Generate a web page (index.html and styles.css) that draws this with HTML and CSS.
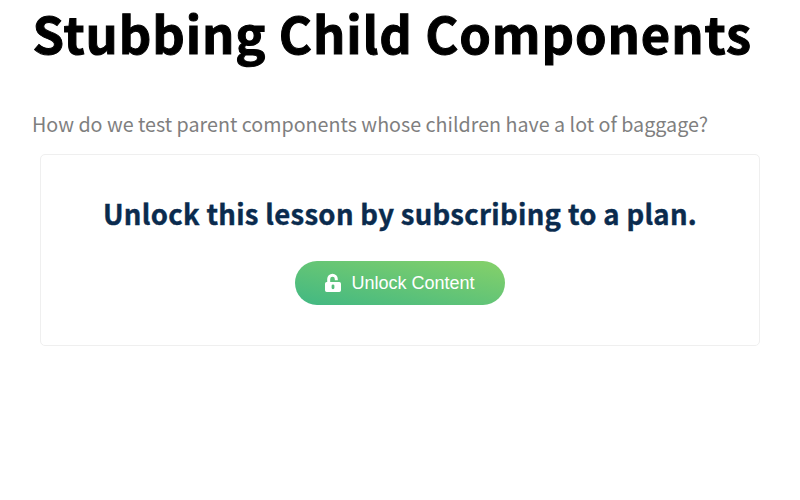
FILE: index.html
```html
<!DOCTYPE html>
<html lang="en">
<head>
<meta charset="utf-8">
<title>Stubbing Child Components</title>
<link rel="stylesheet" href="styles.css">
</head>
<body>
<main class="lesson">
<h1 class="title">Stubbing Child Components</h1>
<p class="summary">How do we test parent components whose children have a lot of baggage?</p>
<section class="locked">
<h2 class="locked-title">Unlock this lesson by subscribing to a plan.</h2>
<button class="unlock" type="button">
<svg class="icon" viewBox="0 0 18 20" aria-hidden="true"><path fill-rule="evenodd" d="M3.2 9V6a5.3 5.3 0 0 1 10.6 0v1.2h-3V6a2.3 2.3 0 0 0-4.6 0v3H15.3a1.7 1.7 0 0 1 1.7 1.7v6.6a1.7 1.7 0 0 1-1.7 1.7H2.7a1.7 1.7 0 0 1-1.7-1.7v-6.6a1.7 1.7 0 0 1 1.7-1.7zM9 11.4a1.4 1.4 0 0 0-1.4 1.4v2a1.4 1.4 0 0 0 2.8 0v-2A1.4 1.4 0 0 0 9 11.4z"/></svg>
<span class="label">Unlock Content</span>
</button>
</section>
</main>
</body>
</html>
```
FILE: styles.css
```css
* { box-sizing: border-box; }
body { margin: 0; background: #fff; font-family: "Noto Sans CJK SC", sans-serif; }
.lesson { padding: 0 32px; }
.title { margin: 0; height: 70px; line-height: 64px; font-size: 50.6px; letter-spacing: 0.9px; text-indent: 0.5px; font-weight: 700; color: #000; white-space: nowrap; -webkit-text-stroke: 1px #000; }
.summary { margin: 39px 0 0; height: 30px; line-height: 30px; font-size: 19.7px; font-weight: 400; color: #7f7f7f; white-space: nowrap; }
.locked { margin: 15px 8px 0; height: 192px; border: 1px solid #efefef; border-radius: 5px; display: flex; flex-direction: column; align-items: center; }
.locked-title { margin: 38px 0 0; line-height: 40px; font-size: 27.5px; letter-spacing: 0.3px; font-weight: 700; color: #0a2b4e; white-space: nowrap; -webkit-text-stroke: 0.4px #0a2b4e; }
.unlock { margin-top: 28px; width: 210px; height: 44px; padding: 0 1px 0 0; border: 0; border-radius: 22px; display: flex; align-items: center; justify-content: center; gap: 9px; color: #fff; background: linear-gradient(to top right, #41b883, #86d169); font: 18px "Liberation Sans", sans-serif; }
.icon { width: 18px; height: 20px; fill: #fff; }
```
